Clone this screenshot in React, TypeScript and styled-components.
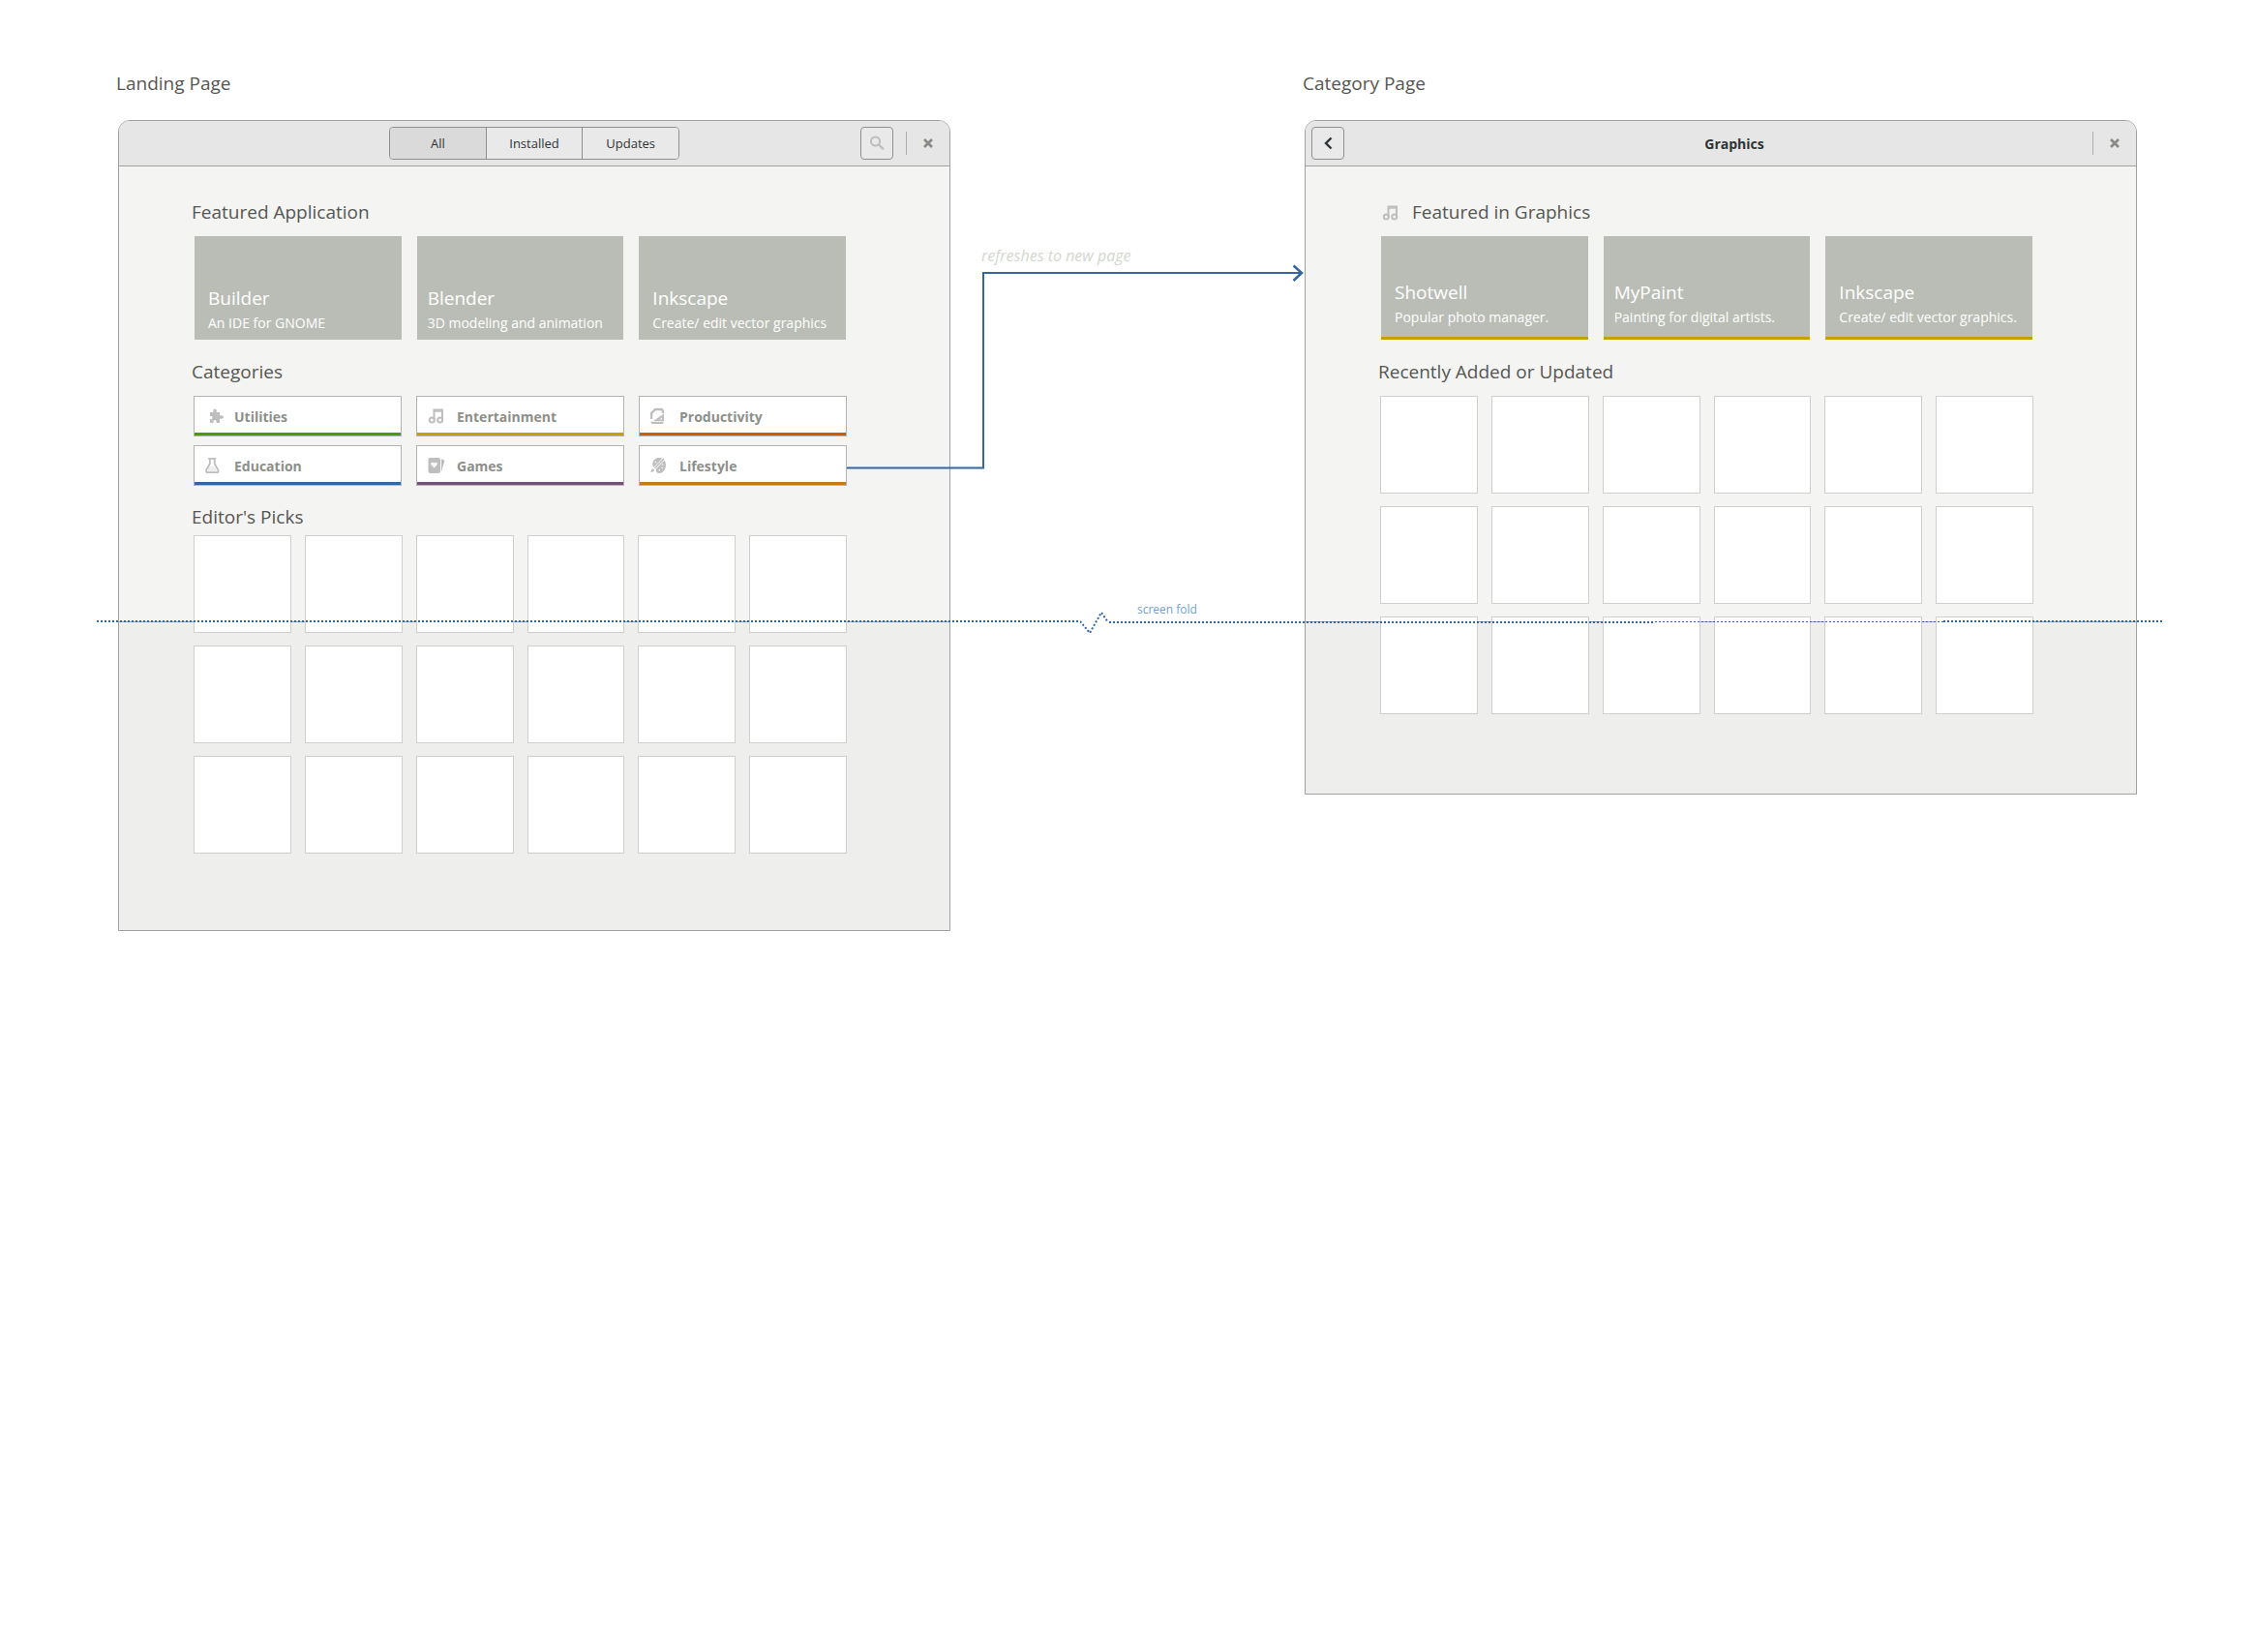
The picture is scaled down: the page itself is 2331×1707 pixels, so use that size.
import React from "react";
import styled, { createGlobalStyle } from "styled-components";

const GlobalStyle = createGlobalStyle`
  *, *::before, *::after { box-sizing: border-box; }
  body {
    margin: 0;
    background: #ffffff;
    font-family: "Open Sans", "Noto Sans", sans-serif;
    color: #555753;
  }
  button { font-family: inherit; margin: 0; padding: 0; cursor: pointer; }
  h1, h2, h3, p, ul { margin: 0; padding: 0; font-weight: 400; list-style: none; }
`;

const BLUE = "#3465a4";
const LINE = "#a1a1a1";

/* ---------- Board ---------- */

const Board = styled.main`
  position: relative;
  display: grid;
  grid-template-columns: 860fr 366fr 860fr;
  align-items: start;
  padding: 71px 123px 80px 122px;
`;

const Screen = styled.section`
  display: flex;
  flex-direction: column;
  gap: 23px;
  min-width: 0;
`;

const ScreenName = styled.h1`
  margin-left: -2px;
  font-size: 19px;
  line-height: 30px;
`;

const Window = styled.div`
  border: 1px solid ${LINE};
  border-radius: 12px 12px 0 0;
  overflow: hidden;
`;

const HeaderBar = styled.header`
  display: grid;
  grid-template-columns: 1fr auto 1fr;
  align-items: center;
  height: 47px;
  padding: 0 6px;
  background: #e6e6e6;
  border-bottom: 1px solid ${LINE};
`;

const HeaderEnd = styled.div`
  grid-column: 3;
  display: flex;
  align-items: center;
  justify-content: flex-end;
`;

const Segments = styled.div`
  grid-column: 2;
  display: flex;
  width: 300px;
  height: 34px;
  border: 1px solid #8f8f8f;
  border-radius: 4px;
  overflow: hidden;
`;

const Segment = styled.button<{ $active?: boolean }>`
  flex: 1;
  border: 0;
  background: ${(p) => (p.$active ? "#dadada" : "#e9e9e9")};
  color: #2e3436;
  font-size: 13px;
  font-weight: 500;

  & + & {
    border-left: 1px solid #8f8f8f;
  }
`;

const SquareButton = styled.button`
  display: grid;
  place-items: center;
  width: 34px;
  height: 34px;
  border: 1px solid #8f8f8f;
  border-radius: 4px;
  background: #e9e9e9;
`;

const HeaderTitle = styled.h2`
  grid-column: 2;
  padding-left: 28px;
  color: #2e3436;
  font-size: 14px;
  font-weight: 700;
`;

const Separator = styled.span`
  width: 1px;
  height: 24px;
  margin: 0 12px 0 13px;
  background: #adadad;
`;

const CloseButton = styled.button`
  display: grid;
  place-items: center;
  width: 20px;
  height: 20px;
  margin-right: 6px;
  border: 0;
  background: none;
`;

const Body = styled.div<{ $foot: number }>`
  padding: 32px 106px ${(p) => p.$foot}px 77px;
  background: linear-gradient(#f4f4f2 470px, ${LINE} 470px 471px, #eeeeec 471px);
`;

const SectionTitle = styled.h2<{ $space?: number }>`
  display: flex;
  align-items: center;
  gap: 11px;
  margin: 0 0 ${(p) => p.$space ?? 10}px -2px;
  font-size: 19px;
  line-height: 30px;
  white-space: nowrap;

  svg {
    margin: 2px 0 0 4px;
  }
`;

/* ---------- Cards ---------- */

const FeaturedRow = styled.div`
  display: grid;
  grid-template-columns: repeat(3, 1fr);
  gap: 16px;
  margin-bottom: 18px;
  padding: 0 1px;
`;

const FeaturedCard = styled.article<{ $accent?: string; $tight?: boolean }>`
  display: flex;
  flex-direction: column;
  justify-content: flex-end;
  height: 107px;
  padding: 0 0 ${(p) => (p.$accent ? 9 : 6)}px ${(p) => (p.$tight ? 11 : 14)}px;
  border-bottom: ${(p) => (p.$accent ? `3px solid ${p.$accent}` : "0")};
  background: #babdb6;
  color: #ffffff;
  white-space: nowrap;
`;

const FeaturedName = styled.h3`
  font-size: 19px;
  line-height: 30px;
`;

const FeaturedText = styled.p`
  font-size: 14px;
  line-height: 22px;
`;

const CategoryGrid = styled.div`
  display: grid;
  grid-template-columns: repeat(3, 1fr);
  gap: 9px 15px;
  margin-bottom: 17px;
`;

const CategoryButton = styled.button<{ $color: string }>`
  display: flex;
  align-items: center;
  gap: 10px;
  height: 42px;
  padding: 0 0 0 11px;
  border: 1px solid #b3b3b1;
  background: #ffffff;
  box-shadow: inset 0 -3px 0 ${(p) => p.$color};
  color: #8d8f8a;
  font-size: 14px;
  font-weight: 700;
`;

const TileGrid = styled.ul`
  display: grid;
  grid-template-columns: repeat(6, 1fr);
  gap: 13px 14px;
`;

const Tile = styled.li`
  height: 101px;
  border: 1px solid #cfcfcd;
  background: #ffffff;
`;

/* ---------- Annotations ---------- */

const Gutter = styled.div`
  position: relative;
  align-self: stretch;
`;

const ConnectorNote = styled.p`
  position: absolute;
  top: 181px;
  left: 32px;
  color: #d3d7cf;
  font-size: 16px;
  font-style: italic;
  line-height: 24px;
  white-space: nowrap;
`;

const Connector = styled.svg`
  position: absolute;
  top: 200px;
  left: -107px;
  width: calc(100% + 107px);
  height: 216px;
`;

const Fold = styled.div`
  position: absolute;
  top: 631px;
  left: 100px;
  right: 97px;
  display: flex;
  height: 26px;
  pointer-events: none;
`;

const Dots = styled.span<{ $grow: number; $top: number; $thin?: boolean }>`
  flex: ${(p) => p.$grow} 1 0;
  height: ${(p) => (p.$thin ? 1 : 2)}px;
  margin-top: ${(p) => p.$top}px;
  background: repeating-linear-gradient(90deg, ${BLUE} 0 2px, transparent 2px 4px);
`;

const FoldLabel = styled.span`
  position: absolute;
  top: -10px;
  left: 1075px;
  color: #729fcf;
  font-size: 12px;
  line-height: 18px;
`;

/* ---------- Icons ---------- */

const GREY = "#bebebe";

const SearchIcon = () => (
  <svg width="16" height="16" viewBox="0 0 16 16" fill="none" stroke={GREY} strokeWidth="2">
    <circle cx="6.5" cy="6" r="4.6" />
    <path d="M10 9.5l4.2 4.2" strokeWidth="2.4" strokeLinecap="round" />
  </svg>
);

const CloseIcon = () => (
  <svg width="10" height="10" viewBox="0 0 10 10" stroke="#888a85" strokeWidth="2.6">
    <path d="M1 1l8 8M9 1L1 9" />
  </svg>
);

const BackIcon = () => (
  <svg width="16" height="16" viewBox="0 0 16 16" fill="none" stroke="#2e3436" strokeWidth="2.4">
    <path d="M11.500 2.500L6 8l5.500 5.500" />
  </svg>
);

const MusicIcon = () => (
  <svg width="20" height="18" viewBox="0 0 20 18" fill="none" stroke={GREY} strokeWidth="2">
    <path d="M6.500 13V2.500H15V13" />
    <path d="M6.500 4H15" strokeWidth="1.500" />
    <circle cx="4.300" cy="13" r="2.500" />
    <circle cx="12.700" cy="13" r="2.500" />
  </svg>
);

const PuzzleIcon = () => (
  <svg width="20" height="18" viewBox="0 0 20 18" fill={GREY}>
    <path d="M5 5h3.500C7.800 2.800 8.600 1.500 10 1.500S12.300 2.800 11.600 5H15v3.600c2.200-.8 4 0 4 1.400s-1.800 2.200-4 1.400V16h-3.400c.5-2-.3-3-1.500-3s-2.100 1-1.600 3H5v-4c1.600.4 2.500-.3 2.500-1.500S6.600 8.600 5 9z" />
  </svg>
);

const FlaskIcon = () => (
  <svg width="20" height="18" viewBox="0 0 20 18" fill="none" stroke={GREY} strokeWidth="1.800">
    <path d="M3.200 2h8" />
    <path d="M4.900 2v5L1.300 13.600c-.6 1.500 0 2.600 1.500 2.600h9c1.500 0 2.100-1.100 1.500-2.600L9.700 7V2" />
    <path d="M3 13l1.800-3.200h5L11.600 13c.4 1.400.2 2-.8 2h-7C2.800 15 2.600 14.400 3 13z" fill="#eeeeee" stroke="none" />
  </svg>
);

const CardsIcon = () => (
  <svg width="20" height="18" viewBox="0 0 20 18">
    <path d="M14 2.500l2.700.8c.6.2.8.6.6 1.200L14 15.500z" fill={GREY} />
    <rect x="0.500" y="1" width="12.500" height="16" rx="2" fill={GREY} />
    <path d="M6.500 11.500L3.400 8.300C2.300 6.500 5 4.700 6.500 6.700c1.500-2 4.200-.2 3.100 1.600z" fill="#ffffff" />
  </svg>
);

const DocumentIcon = () => (
  <svg width="20" height="18" viewBox="0 0 20 18">
    <path d="M1 12V6l4-4h6.500L13 3.500V6" fill="none" stroke={GREY} strokeWidth="2.400" />
    <path d="M14 6.500V14H3z" fill={GREY} />
    <path d="M9.500 12.500h2.500v-2z" fill="#ffffff" />
    <path d="M0 14.800h14L12.500 17h-11z" fill={GREY} />
  </svg>
);

const PaletteIcon = () => (
  <svg width="20" height="18" viewBox="0 0 20 18">
    <path d="M9 1c4.500 0 7 3.400 7 7.500S13 17 9.500 17c-2.500 0-3.800-1-3.500-3 .2-1.600-.3-2.200-1.600-2.800C2.700 10.400 2 9 2.300 6.800 2.800 3.400 5.400 1 9 1z" fill={GREY} />
    <path d="M14.500 1.500L1.500 15" stroke="#ffffff" strokeWidth="3" />
    <path d="M14 2L4.500 11.800" stroke={GREY} strokeWidth="1.600" />
    <path d="M0 15.800c1.200-.6.800-2.600 2.300-3.800l2 1.800c-1 1.700-2.600 2.300-4.300 2z" fill={GREY} />
    <g fill="#ffffff">
      <circle cx="12.800" cy="8" r="0.800" />
      <circle cx="12.300" cy="11.500" r="0.800" />
      <circle cx="9.300" cy="13.800" r="0.800" />
      <circle cx="5.500" cy="5.500" r="0.800" />
    </g>
  </svg>
);

/* ---------- Data ---------- */

const GOLD = "#c4a000";

const landingApps = [
  { name: "Builder", text: "An IDE for GNOME" },
  { name: "Blender", text: "3D modeling and animation" },
  { name: "Inkscape", text: "Create/ edit vector graphics" },
];

const graphicsApps = [
  { name: "Shotwell", text: "Popular photo manager." },
  { name: "MyPaint", text: "Painting for digital artists." },
  { name: "Inkscape", text: "Create/ edit vector graphics." },
];

const categories = [
  { label: "Utilities", color: "#4e9a06", Icon: PuzzleIcon },
  { label: "Entertainment", color: GOLD, Icon: MusicIcon },
  { label: "Productivity", color: "#ce5c00", Icon: DocumentIcon },
  { label: "Education", color: BLUE, Icon: FlaskIcon },
  { label: "Games", color: "#75507b", Icon: CardsIcon },
  { label: "Lifestyle", color: "#c17d11", Icon: PaletteIcon },
];

/* ---------- Parts ---------- */

type App = { name: string; text: string };

const Featured = ({ apps, accent }: { apps: App[]; accent?: string }) => (
  <FeaturedRow>
    {apps.map((app, i) => (
      <FeaturedCard key={app.name} $accent={accent} $tight={i === 1}>
        <FeaturedName>{app.name}</FeaturedName>
        <FeaturedText>{app.text}</FeaturedText>
      </FeaturedCard>
    ))}
  </FeaturedRow>
);

const Tiles = () => (
  <TileGrid>
    {Array.from({ length: 18 }, (_, i) => (
      <Tile key={i} />
    ))}
  </TileGrid>
);

const WindowClose = () => (
  <>
    <Separator />
    <CloseButton aria-label="Close">
      <CloseIcon />
    </CloseButton>
  </>
);

export default function App() {
  return (
    <>
      <GlobalStyle />
      <Board>
        <Screen>
          <ScreenName>Landing Page</ScreenName>
          <Window>
            <HeaderBar>
              <Segments>
                <Segment $active>All</Segment>
                <Segment>Installed</Segment>
                <Segment>Updates</Segment>
              </Segments>
              <HeaderEnd>
                <SquareButton aria-label="Search">
                  <SearchIcon />
                </SquareButton>
                <WindowClose />
              </HeaderEnd>
            </HeaderBar>
            <Body $foot={79}>
              <SectionTitle>Featured Application</SectionTitle>
              <Featured apps={landingApps} />
              <SectionTitle>Categories</SectionTitle>
              <CategoryGrid>
                {categories.map(({ label, color, Icon }) => (
                  <CategoryButton key={label} $color={color}>
                    <Icon />
                    {label}
                  </CategoryButton>
                ))}
              </CategoryGrid>
              <SectionTitle $space={4}>Editor's Picks</SectionTitle>
              <Tiles />
            </Body>
          </Window>
        </Screen>

        <Gutter>
          <ConnectorNote>refreshes to new page</ConnectorNote>
          <Connector viewBox="0 0 473 216" preserveAspectRatio="none" fill="none" stroke={BLUE} strokeWidth="2">
            <path d="M0 212.500H141V11H470" />
            <path d="M461.500 3.500L470 11l-8.500 8" strokeWidth="2.500" />
          </Connector>
        </Gutter>

        <Screen>
          <ScreenName>Category Page</ScreenName>
          <Window>
            <HeaderBar>
              <SquareButton aria-label="Back">
                <BackIcon />
              </SquareButton>
              <HeaderTitle>Graphics</HeaderTitle>
              <HeaderEnd>
                <WindowClose />
              </HeaderEnd>
            </HeaderBar>
            <Body $foot={82}>
              <SectionTitle>
                <MusicIcon />
                Featured in Graphics
              </SectionTitle>
              <Featured apps={graphicsApps} accent={GOLD} />
              <SectionTitle>Recently Added or Updated</SectionTitle>
              <Tiles />
            </Body>
          </Window>
        </Screen>

        <Fold>
          <Dots $grow={1016} $top={10} />
          <svg width="30" height="26" viewBox="0 0 30 26" fill="none" stroke={BLUE} strokeWidth="2" strokeDasharray="2 2">
            <path d="M0 11l10 12L22 2l7 10" />
          </svg>
          <Dots $grow={564} $top={11} />
          <Dots $grow={298} $top={11} $thin />
          <Dots $grow={226} $top={10} />
          <FoldLabel>screen fold</FoldLabel>
        </Fold>
      </Board>
    </>
  );
}
